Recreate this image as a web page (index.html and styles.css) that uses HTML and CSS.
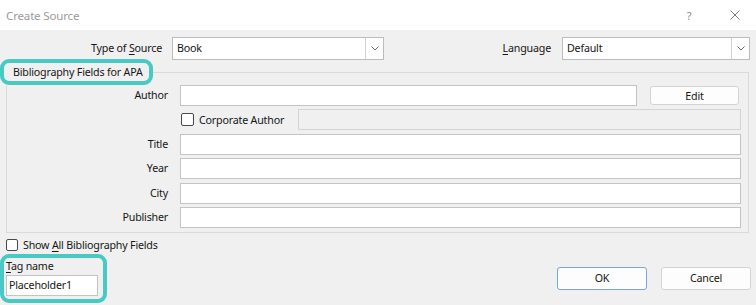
FILE: index.html
```html
<!DOCTYPE html>
<html lang="en">
<head>
<meta charset="utf-8">
<title>Create Source</title>
<link rel="stylesheet" href="styles.css">
</head>
<body>
<div class="window">
  <header class="titlebar">
    <span class="title">Create Source</span>
    <span class="help">?</span>
    <svg class="close" width="10" height="10" viewBox="0 0 10 10"><path d="M0.5 0.5 L9.5 9.5 M9.5 0.5 L0.5 9.5" stroke="#7a7a7a" stroke-width="1" fill="none"/></svg>
  </header>
  <main class="content">
    <div class="toprow">
      <span class="lbl lbl-type">Type of <u>S</u>ource</span>
      <div class="select sel-type">
        <span class="val">Book</span>
        <span class="arrow"><svg width="8" height="5" viewBox="0 0 8 5"><path d="M0.5 0.5 L4 4 L7.5 0.5" stroke="#6a6a6a" stroke-width="1" fill="none"/></svg></span>
      </div>
      <span class="spacer"></span>
      <span class="lbl lbl-lang"><u>L</u>anguage</span>
      <div class="select sel-lang">
        <span class="val">Default</span>
        <span class="arrow"><svg width="8" height="5" viewBox="0 0 8 5"><path d="M0.5 0.5 L4 4 L7.5 0.5" stroke="#6a6a6a" stroke-width="1" fill="none"/></svg></span>
      </div>
    </div>

    <fieldset class="fields">
      <legend class="hl legend">Bibliography Fields for APA</legend>
      <div class="grid">
        <span class="lbl rlbl">Author</span>
        <div class="author-row">
          <div class="input"></div>
          <div class="btn btn-edit">Edit</div>
        </div>

        <span></span>
        <div class="corp-row">
          <span class="check"></span>
          <span class="corp-text">Corporate Author</span>
          <div class="input disabled"></div>
        </div>

        <span class="lbl rlbl">Title</span>
        <div class="input"></div>

        <span class="lbl rlbl">Year</span>
        <div class="input"></div>

        <span class="lbl rlbl">City</span>
        <div class="input"></div>

        <span class="lbl rlbl">Publisher</span>
        <div class="input"></div>
      </div>
    </fieldset>

    <div class="bottom">
      <div class="left">
        <div class="show-row">
          <span class="check small"></span>
          <span>Show <u>A</u>ll Bibliography Fields</span>
        </div>
        <div class="hl tagbox">
          <div class="tag-label"><u>T</u>ag name</div>
          <div class="input tag-input">Placeholder1</div>
        </div>
      </div>
      <div class="buttons">
        <div class="btn btn-ok">OK</div>
        <div class="btn btn-cancel">Cancel</div>
      </div>
    </div>
  </main>
</div>
</body>
</html>
```

FILE: styles.css
```css
* { box-sizing: border-box; }

html, body {
  margin: 0;
  padding: 0;
}

body {
  width: 756px;
  height: 305px;
  overflow: hidden;
  background: #f0f0f0;
  font-family: "Noto Sans", "Open Sans", sans-serif;
  font-size: 10.7px;
  letter-spacing: -0.2px;
  color: #161616;
}

u { text-decoration: underline; text-underline-offset: 2px; }

.titlebar {
  height: 30px;
  background: #ffffff;
  display: flex;
  align-items: center;
  padding: 0 16px 0 6px;
}

.title {
  flex: 1;
  color: #9b9b9b;
  font-size: 11.6px;
}

.help {
  width: 8px;
  text-align: center;
  color: #8a8a8a;
  font-size: 11px;
  margin-right: 37px;
}

.close { display: block; }

.content {
  padding-top: 7px;
}

.toprow {
  display: flex;
  align-items: center;
  height: 23px;
}

.lbl { line-height: 21px; white-space: nowrap; }

.lbl-type {
  width: 162px;
  text-align: right;
  margin-right: 10px;
}

.lbl-lang { margin-right: 11px; }

.spacer { flex: 1; }

.select {
  display: flex;
  height: 23px;
  background: #ffffff;
  border: 1px solid #bcbcbc;
}

.select .val {
  flex: 1;
  padding-left: 4px;
  line-height: 21px;
}

.select .arrow {
  width: 18px;
  border-left: 1px solid #d2d2d2;
  display: flex;
  align-items: center;
  justify-content: center;
}

.select .arrow svg { display: block; }

.sel-type { width: 212px; }
.sel-lang { width: 188px; margin-right: 6px; }

.hl {
  border: 4px solid #48c9c4;
  border-radius: 9px;
}

.fields {
  margin: -1px 7px 0 6px;
  padding: 0 7px 4px 0;
  border: 1px solid #dadada;
  min-width: 0;
}

.legend {
  margin-left: -7px;
  padding: 0 6px 0 9px;
  line-height: 18px;
  background: #f0f0f0;
}

.grid {
  display: grid;
  grid-template-columns: 161px 1fr;
  column-gap: 12px;
  row-gap: 3.4px;
}

.rlbl { text-align: right; }

.input {
  height: 21px;
  background: #ffffff;
  border: 1px solid #c4c4c4;
}

.input.disabled {
  background: #f0f0f0;
  border-color: #d4d4d4;
}

.author-row {
  display: flex;
  align-items: center;
  gap: 13px;
}

.author-row .input { flex: 1; }

.btn {
  display: flex;
  align-items: center;
  justify-content: center;
  background: #fdfdfd;
  border: 1px solid #d3d3d3;
  border-radius: 3px;
}

.btn-edit {
  width: 89px;
  height: 19px;
  margin-right: 2px;
}

.corp-row {
  display: flex;
  align-items: center;
  height: 21px;
}

.check {
  width: 13px;
  height: 13px;
  border: 1px solid #4a4a4a;
  border-radius: 2px;
  background: #ffffff;
  margin-left: 1px;
}

.corp-text { margin-left: 5px; }

.corp-row .input { flex: 1; margin-left: 14px; }

.bottom {
  display: flex;
  justify-content: space-between;
  align-items: flex-end;
  padding-right: 5px;
}

.show-row {
  display: flex;
  align-items: center;
  gap: 5px;
  height: 12px;
  margin: 6px 0 0 6px;
}

.check.small {
  width: 12px;
  height: 12px;
  margin-left: 0;
}

.tagbox {
  width: 107px;
  margin-top: 3px;
  padding: 0 5px 3px 2px;
}

.tag-label { line-height: 16px; }

.tag-input {
  margin-top: 1px;
  padding-left: 2px;
  line-height: 19px;
}

.buttons {
  display: flex;
  gap: 14px;
  margin-bottom: 13px;
}

.btn-ok, .btn-cancel {
  width: 90px;
  height: 23px;
  background: #fdfdfd;
}

.btn-ok {
  border-color: #7aa7d8;
}
```
